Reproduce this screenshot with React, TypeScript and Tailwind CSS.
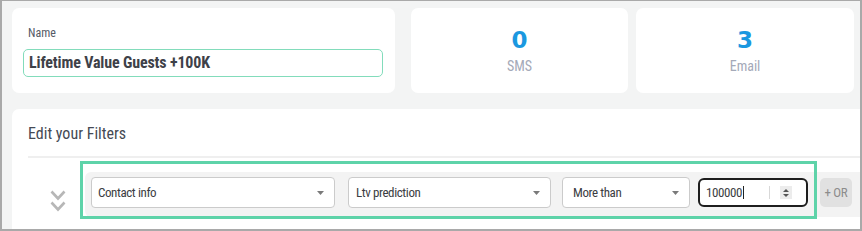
import React from "react";

function Caret() {
  return (
    <svg width="7" height="4" viewBox="0 0 7 4" className="shrink-0">
      <path d="M0 0 L7 0 L3.5 4 Z" fill="#7a7a7a" />
    </svg>
  );
}

function Select({ label, w, pl }: { label: string; w: string; pl: string }) {
  return (
    <div
      className={`${w} ${pl} h-[31px] shrink-0 border border-[#cbcbcb] rounded-[4px] bg-white flex items-center justify-between pr-[10px] text-[13px] tracking-[-0.4px] text-[#3b3d42]`}
    >
      <span>{label}</span>
      <Caret />
    </div>
  );
}

export default function App() {
  return (
    <div className="relative w-[862px] h-[231px] overflow-hidden border-t border-l-2 border-r-2 border-b-2 border-[#a9a9a9] bg-[#f3f4f4] font-['Roboto_Condensed','Liberation_Sans_Narrow','DejaVu_Sans_Condensed',sans-serif]">
      {/* top row */}
      <div className="flex pt-[7px] pl-[10px]">
        <div className="w-[383px] h-[85px] bg-white rounded-[7px] pt-[17px] pl-[11px] pr-[12px]">
          <div className="ml-[5px] h-4 leading-4 text-[12px] text-[#555b66]">Name</div>
          <div className="mt-[8px] h-[28px] border border-[#82dcbb] rounded-[5px] flex items-center pl-[5px] text-[16px] tracking-[-0.15px] font-bold text-[#3e4148]">
            Lifetime Value Guests +100K
          </div>
        </div>
        <div className="ml-[16px] w-[217px] h-[85px] bg-white rounded-[7px] flex flex-col items-center pt-[19px]">
          <div className="h-[26px] leading-[26px] text-[23px] font-bold text-[#1b98e0] font-['DejaVu_Sans',sans-serif]">0</div>
          <div className="mt-[5px] text-[14px] leading-4 text-[#a4a9b8]">SMS</div>
        </div>
        <div className="ml-[8px] w-[218px] h-[85px] bg-white rounded-[7px] flex flex-col items-center pt-[19px]">
          <div className="h-[26px] leading-[26px] text-[23px] font-bold text-[#1b98e0] font-['DejaVu_Sans',sans-serif]">3</div>
          <div className="mt-[5px] text-[14px] leading-4 text-[#a4a9b8]">Email</div>
        </div>
      </div>

      {/* filters card */}
      <div className="ml-[10px] mt-[16px] w-[900px] bg-white rounded-[7px] pt-[15px] px-4 pb-6">
        <div className="h-5 leading-5 text-[16px] text-[#454a54]">Edit your Filters</div>
        <div className="mt-[12px] h-[2px] bg-[#efefef]" />
        <div className="mt-[14px] flex">
          <div className="w-[57px] shrink-0">
            <svg width="16" height="23" viewBox="0 0 16 23" className="ml-[22px] mt-[18px]">
              <polyline points="1.5,1.5 8,8.5 14.5,1.5" fill="none" stroke="#b7b7b7" strokeWidth="2.6" />
              <polyline points="1.5,12.5 8,19.5 14.5,12.5" fill="none" stroke="#b7b7b7" strokeWidth="2.6" />
            </svg>
          </div>
          <div className="flex-1 bg-[#f3f3f3] rounded-l-[6px] pl-[6px] pt-[5px] pb-[9px] flex items-start">
            <Select label="Contact info" w="w-[244px]" pl="pl-[6px]" />
            <div className="ml-[13px]">
              <Select label="Ltv prediction" w="w-[203px]" pl="pl-[7px]" />
            </div>
            <div className="ml-[11px]">
              <Select label="More than" w="w-[128px]" pl="pl-[10px]" />
            </div>
            <div className="ml-[8px] mt-[1px] w-[110px] h-[29px] border-2 border-[#1e1e1e] rounded-[6px] bg-white flex items-center pl-[6px] pr-[14px] text-[13px] tracking-[-0.4px] text-[#3b3d42]">
              <span>100000</span>
              <span className="ml-[1px] w-px h-[13px] bg-[#222]" />
              <span className="ml-auto mr-[8px] w-[5px] h-[13px] flex flex-col items-center justify-between">
                <span className="w-px h-full bg-[#d8d8d8]" />
              </span>
              <span className="w-[12px] h-[13px] bg-[#ececec] flex flex-col items-center justify-center gap-[2px]">
                <svg width="6" height="3" viewBox="0 0 6 3"><path d="M0 3 L3 0 L6 3 Z" fill="#555" /></svg>
                <svg width="6" height="3" viewBox="0 0 6 3"><path d="M0 0 L6 0 L3 3 Z" fill="#555" /></svg>
              </span>
            </div>
            <div className="ml-[12px] mt-[1px] w-[32px] h-[29px] bg-[#e1e1e1] rounded-[5px] flex items-center justify-center text-[13px] tracking-[-0.3px] text-[#8c8c8c]">
              + OR
            </div>
          </div>
        </div>
      </div>

      {/* highlight annotation */}
      <div className="pointer-events-none absolute left-[78px] top-[160px] w-[737px] h-[58px] border-[3px] border-[#5ed3a9]" />
    </div>
  );
}
